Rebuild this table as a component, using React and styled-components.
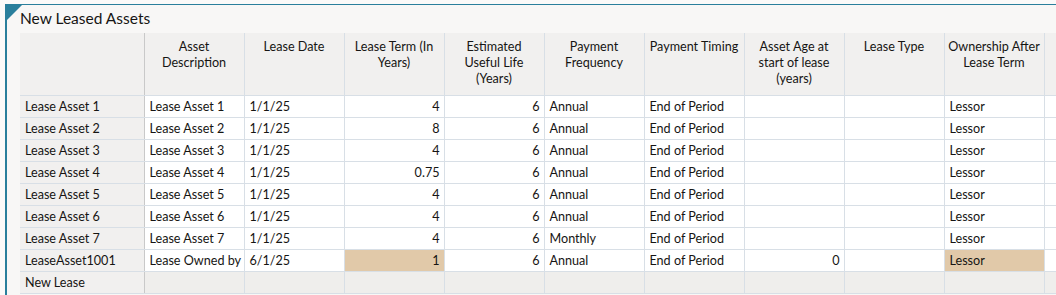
import styled, { createGlobalStyle } from 'styled-components';

const Global = createGlobalStyle`
    body {
        margin: 0;
        background: #fbfaf9;
        font-family: 'Lato', 'Noto Sans', sans-serif;
        color: #161513;
        overflow: hidden;
    }
`

const Page = styled.div`
    padding: 4px 0 0 5px;
    height: 291px;
    overflow: hidden;
`

const Panel = styled.section`
    position: relative;
    border-top: 1px solid #2a7f9c;
    border-left: 2px solid #2a7f9c;
    background: #f8f7f6;
    height: 290px;
    overflow: hidden;

    &::before {
        content: '';
        position: absolute;
        left: 0;
        top: 0;
        border-top: 15px solid #2a7f9c;
        border-right: 15px solid transparent;
    }
`

const Title = styled.h2`
    margin: 0;
    height: 28px;
    padding: 4px 0 0 13px;
    box-sizing: border-box;
    font-size: 15.5px;
    font-weight: 400;
    line-height: 18px;
`

const Grid = styled.table`
    margin-left: 13px;
    border-collapse: collapse;
    table-layout: fixed;
    width: 1124px;
    font-size: 12.6px;
`

const HeadCell = styled.th`
    background: #f1f0ef;
    border-right: 1px solid #d8dfe6;
    border-bottom: 1px solid #d8dfe6;
    height: 62px;
    padding: 6px 2px 0;
    box-sizing: border-box;
    vertical-align: top;
    font-weight: 400;
    line-height: 16px;
    text-align: center;
    overflow: hidden;
    white-space: nowrap;

    &:first-child {
        border-right-color: #c9c9c9;
    }
`

const HeadLine = styled.span`
    display: block;
`

const RowHead = styled.th`
    background: #f1f0ef;
    border-right: 1px solid #c9c9c9;
    border-bottom: 1px solid #d8dfe6;
    height: 21px;
    padding: 0 5px;
    font-weight: 400;
    text-align: left;
    white-space: nowrap;
`

const Cell = styled.td`
    background: ${props => props.$edited ? '#e1c9a9' : props.$blank ? '#efeeec' : '#ffffff'};
    border-right: 1px solid #d8dfe6;
    border-bottom: 1px solid #d8dfe6;
    height: 21px;
    padding: 0 ${props => props.$num ? '4px' : '5px'};
    text-align: ${props => props.$num ? 'right' : 'left'};
    white-space: nowrap;
    overflow: hidden;
`

const headers = [
    ['Asset', 'Description'],
    ['Lease Date'],
    ['Lease Term (In', 'Years)'],
    ['Estimated', 'Useful Life', '(Years)'],
    ['Payment', 'Frequency'],
    ['Payment Timing'],
    ['Asset Age at', 'start of lease', '(years)'],
    ['Lease Type'],
    ['Ownership After', 'Lease Term'],
    ['Incremental'],
]

const rows = [
    ['Lease Asset 1', 'Lease Asset 1', '1/1/25', '4', '6', 'Annual', 'End of Period', '', '', 'Lessor'],
    ['Lease Asset 2', 'Lease Asset 2', '1/1/25', '8', '6', 'Annual', 'End of Period', '', '', 'Lessor'],
    ['Lease Asset 3', 'Lease Asset 3', '1/1/25', '4', '6', 'Annual', 'End of Period', '', '', 'Lessor'],
    ['Lease Asset 4', 'Lease Asset 4', '1/1/25', '0.75', '6', 'Annual', 'End of Period', '', '', 'Lessor'],
    ['Lease Asset 5', 'Lease Asset 5', '1/1/25', '4', '6', 'Annual', 'End of Period', '', '', 'Lessor'],
    ['Lease Asset 6', 'Lease Asset 6', '1/1/25', '4', '6', 'Annual', 'End of Period', '', '', 'Lessor'],
    ['Lease Asset 7', 'Lease Asset 7', '1/1/25', '4', '6', 'Monthly', 'End of Period', '', '', 'Lessor'],
    ['LeaseAsset1001', 'Lease Owned by', '6/1/25', '1', '6', 'Annual', 'End of Period', '0', '', 'Lessor'],
]

const numeric = [false, false, true, true, false, false, true, false, false, true]
const edited = { 7: [2, 8] }

export default function App() {
    return (
        <>
            <Global />
            <Page>
                <Panel>
                    <Title>New Leased Assets</Title>
                    <Grid>
                        <colgroup>
                            <col style={{ width: 124 }} />
                            {headers.map(h => <col key={h[0]} style={{ width: 100 }} />)}
                        </colgroup>
                        <thead>
                            <tr>
                                <HeadCell />
                                {headers.map(h => (
                                    <HeadCell key={h[0]}>
                                        {h.map(line => <HeadLine key={line}>{line}</HeadLine>)}
                                    </HeadCell>
                                ))}
                            </tr>
                        </thead>
                        <tbody>
                            {rows.map((r, i) => (
                                <tr key={i}>
                                    <RowHead>{r[0]}</RowHead>
                                    {r.slice(1).map((v, j) => (
                                        <Cell key={j} $num={numeric[j]} $edited={edited[i]?.includes(j)}>{v}</Cell>
                                    ))}
                                    <Cell />
                                </tr>
                            ))}
                            <tr>
                                <RowHead>New Lease</RowHead>
                                {headers.map(h => <Cell key={h[0]} $blank />)}
                            </tr>
                        </tbody>
                    </Grid>
                </Panel>
            </Page>
        </>
    )
}
